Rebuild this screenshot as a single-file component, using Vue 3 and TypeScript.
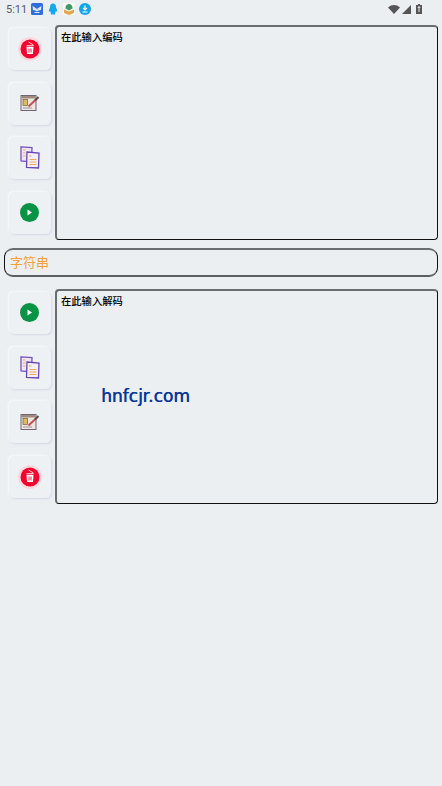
<script setup lang="ts">
type IconName = 'trash' | 'note' | 'copy' | 'play'

interface Section {
  id: string
  hint: string
  buttons: IconName[]
  watermark?: string
}

const sections: Section[] = [
  { id: 'encode', hint: '在此输入编码', buttons: ['trash', 'note', 'copy', 'play'] },
  { id: 'decode', hint: '在此输入解码', buttons: ['play', 'copy', 'note', 'trash'], watermark: 'hnfcjr.com' },
]
</script>

<template>
  <div class="page">
    <!-- Status bar -->
    <div class="status-bar">
      <div class="status-left">
        <span class="clock">5:11</span>
        <svg width="12" height="12" viewBox="0 0 12 12">
          <rect width="12" height="12" rx="1.5" fill="#2f6fdc" />
          <path d="M1.500 3 5.500 5.500 6 7 6.500 5.500 10.500 3 10 7 7.500 7.500 6 8.500 4.500 7.500 2 7Z" fill="#dfe9fb" />
          <path d="M3.500 9.500H8.500" stroke="#dfe9fb" />
        </svg>
        <svg width="12" height="12" viewBox="0 0 12 12">
          <path d="M6 .5C4 .5 3 2 3 4 3 5.500 1.700 6.500 1.800 8.200 2 9 2.600 8.500 3 8 3.300 9 3.800 9.700 4.300 10.200 3.500 10.500 3.600 11.500 4.800 11.500H7.200C8.400 11.500 8.500 10.500 7.700 10.200 8.200 9.700 8.700 9 9 8 9.400 8.500 10 9 10.200 8.200 10.300 6.500 9 5.500 9 4 9 2 8 .5 6 .5Z" fill="#16a8ee" />
        </svg>
        <svg width="12" height="12" viewBox="0 0 12 12">
          <rect width="12" height="12" fill="#fafaf4" />
          <path d="M1 6.500 6 8.500 11 6.500V10L6 12 1 10Z" fill="#e3a64a" />
          <path d="M2.500 5.500C2.500 2 4.500 1 6 1S9.500 2 9.500 5.500L6 7.500Z" fill="#3f9a63" />
        </svg>
        <svg width="12" height="12" viewBox="0 0 12 12">
          <circle cx="6" cy="6" r="6" fill="#12a5ea" />
          <path d="M6 2.500V6.500M4 5 6 7 8 5M3.500 9H8.500" fill="none" stroke="#fff" stroke-width="1.200" />
        </svg>
      </div>
      <div class="status-right">
        <svg width="12" height="9" viewBox="0 0 12 9"><path d="M0 2.500C3.500-.8 8.500-.8 12 2.500L6 9Z" fill="#555" /></svg>
        <svg width="9" height="9" viewBox="0 0 9 9"><path d="M9 0V9H0Z" fill="#555" /></svg>
        <svg class="battery" width="6" height="10" viewBox="0 0 6 10">
          <path d="M2 0H4V1H6V10H0V1H2Z" fill="#555" />
          <path d="M3 2.500V8M1.800 4 3 2.500 4.200 4" fill="none" stroke="#eee" />
        </svg>
      </div>
    </div>

    <template v-for="(section, index) in sections" :key="section.id">
      <div v-if="index === 1" class="string-box">字符串</div>
      <div class="editor-row" :class="section.id">
        <div class="side-buttons">
          <button v-for="icon in section.buttons" :key="icon" class="tool-btn">
            <svg v-if="icon === 'trash'" width="24" height="24" viewBox="0 0 24 24">
              <circle cx="12" cy="12" r="12" fill="#fbd9df" />
              <circle cx="12" cy="12" r="9.500" fill="#f5032e" />
              <path d="M8.500 10H15.500L15 17H9Z" fill="#fff" />
              <path d="M11 11.500V15.500M13 11.500V15.500" stroke="#f5032e" stroke-width=".9" />
              <path d="M8.500 8.800H15.500" stroke="#fff" />
              <path d="M10.500 5 15.500 8" fill="none" stroke="#fff" stroke-width=".8" />
            </svg>
            <svg v-else-if="icon === 'note'" width="20" height="18" viewBox="0 0 20 18">
              <rect x="1" y="1.500" width="15" height="15" fill="#ece6df" stroke="#6f6478" />
              <rect x="1.500" y="2" width="14" height="2.500" fill="#a08a80" />
              <rect x="3" y="5.500" width="4.500" height="6" fill="#e0bb5a" stroke="#6e5f45" stroke-width=".7" />
              <path d="M8.500 12.500 15.500 6" stroke="#c4505f" stroke-width="2" />
              <path d="M15 6.500 18.500 3" stroke="#5a4a3c" stroke-width="2" />
              <path d="M3 14H12" stroke="#9d93a0" />
            </svg>
            <svg v-else-if="icon === 'copy'" width="20" height="23" viewBox="0 0 20 23">
              <path d="M1 .8 12 1.500 11.500 16 1 15Z" fill="#ece8f4" stroke="#7a52c0" stroke-width="1.300" />
              <path d="M7 6 19 7 18.500 22 6.500 21.500Z" fill="#f3eff6" stroke="#6a45b5" stroke-width="1.300" />
              <path d="M3 4H5.500M3 7H5.500M3 10H5.500M9 10H11.500M9.500 13.500H16.500M9.500 16H16.500M9.500 18.500H16.500" stroke="#eda95a" />
            </svg>
            <svg v-else width="19" height="19" viewBox="0 0 19 19">
              <circle cx="9.500" cy="9.500" r="9.500" fill="#089444" />
              <path d="M7.500 6.500 12 9.500 7.500 12.500Z" fill="#fff" />
            </svg>
          </button>
        </div>
        <div class="text-box">
          <span class="hint">{{ section.hint }}</span>
          <span v-if="section.watermark" class="watermark">{{ section.watermark }}</span>
        </div>
      </div>
    </template>
  </div>
</template>

<style scoped>
.page {
  width: 442px;
  height: 786px;
  background: #ebeff2;
  overflow: hidden;
  font-family: "Roboto", "Noto Sans CJK SC", sans-serif;
}

.status-bar {
  height: 18px;
  padding: 0 20px 0 6px;
  display: flex;
  align-items: center;
  justify-content: space-between;
}

.status-left {
  display: flex;
  align-items: center;
  gap: 4px;
}

.clock {
  font-size: 11px;
  color: #555a5e;
  width: 21px;
}

.status-right {
  display: flex;
  align-items: center;
  gap: 2px;
}

.status-right .battery {
  margin-left: 3px;
}

.editor-row {
  display: flex;
  gap: 4px;
  padding: 0 4px 0 9px;
  height: 215px;
}

.encode {
  margin-top: 7px;
}

.decode {
  margin-top: 12px;
}

.side-buttons {
  width: 42px;
  display: flex;
  flex-direction: column;
  gap: 12.7px;
  padding-top: 3px;
}

.tool-btn {
  width: 42px;
  height: 42px;
  padding: 0 1px 1px 0;
  border: none;
  border-radius: 5px;
  background: #eef1f4;
  box-shadow: 1px 1px 2px #d5d9e6, -1px -1px 2px #f8fafb;
  display: flex;
  align-items: center;
  justify-content: center;
}

.text-box {
  position: relative;
  flex: 1;
  border-style: solid;
  border-width: 2px 1.5px 1.5px 2px;
  border-color: #6a6d70 #111 #111 #6a6d70;
  border-radius: 4px;
  padding: 3px 4px;
}

.hint {
  display: block;
  font-size: 10.3px;
  line-height: 15px;
  font-weight: 500;
  color: #000;
}

.watermark {
  position: absolute;
  left: 44px;
  top: 93px;
  font-family: "DejaVu Sans", sans-serif;
  font-size: 17px;
  line-height: 24px;
  color: #0a3797;
  text-shadow: 0.5px 0 0 #0a3797;
}

.string-box {
  margin: 8px 4px 0;
  height: 29px;
  box-sizing: border-box;
  border-style: solid;
  border-width: 2px 1.5px;
  border-color: #6a6d70 #111 #5c5f62 #111;
  border-radius: 9px;
  padding-left: 5px;
  font-size: 13px;
  line-height: 26px;
  color: #f2a03c;
}
</style>

<style>
body {
  background: #ebeff2;
}
</style>
